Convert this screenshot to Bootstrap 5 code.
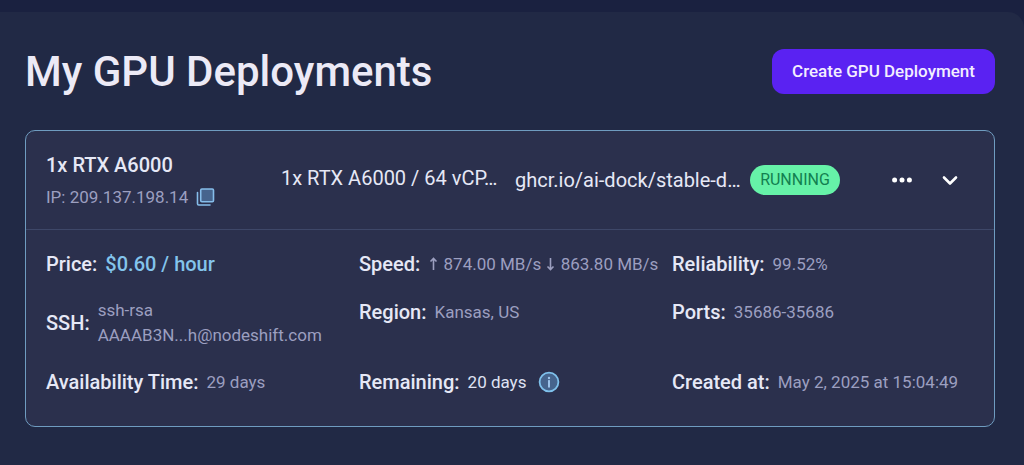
<!DOCTYPE html>
<html lang="en">
<head>
<meta charset="utf-8">
<meta name="viewport" content="width=device-width, initial-scale=1">
<title>My GPU Deployments</title>
<link href="https://cdn.jsdelivr.net/npm/bootstrap@5.3.0/dist/css/bootstrap.min.css" rel="stylesheet">
<style>
  body { background: #1a2140; color: #e6e8f6; font-family: Roboto, "Liberation Sans", sans-serif; font-size: 17px; line-height: 24px; padding-top: 12px; }
  .panel { background: #212945; border-radius: 0 16px 0 0; padding: 32px 29px 38px 25px; min-height: calc(100vh - 12px); }
  .page-head { margin-bottom: 31px; }
  .page-title { font-size: 42px; line-height: 55px; font-weight: 500; color: #eceaf6; }
  .btn-create { background: #5a22f2; color: #f3eeff; font-size: 17px; font-weight: 500; line-height: 25px; padding: 10px 20px; border: 0; border-radius: 12px; }
  .btn-create:hover { background: #6a38f5; color: #fff; }
  .deployment { background: #2b304d; border: 1px solid #6f9cc0; border-radius: 10px; color: inherit; }
  .deployment-head { display: grid; grid-template-columns: 227px 226px 227px 90px 1fr; column-gap: 8px; align-items: center; min-height: 99px; padding: 0 32px 0 20px; border-bottom: 1px solid #3e4768; }
  .machine { font-size: 20px; font-weight: 500; line-height: 28px; margin-bottom: 6px; }
  .muted { color: #9c9fc0; }
  .specs { font-size: 20px; }
  .status { background: #66f2a8; color: #128050; border-radius: 15px; font-size: 16px; font-weight: 400; line-height: 30px; padding: 0; }
  .icon-btn { background: none; border: 0; padding: 0; color: #fff; line-height: 0; }
  .facts { display: grid; grid-template-columns: repeat(3, 1fr); row-gap: 20px; padding: 20px 9px 30px 20px; }
  .fact { display: flex; gap: 8px; line-height: 28px; }
  .fact dt { font-size: 20px; font-weight: 500; white-space: nowrap; }
  .fact dd { margin: 0; color: #9c9fc0; }
  .fact .ssh-key { line-height: 25px; }
  .fact .price { color: #83c4ec; font-size: 20px; font-weight: 500; }
  .fact .remaining { color: #dfe2f3; }
  .arrow { width: 11px; height: 14px; vertical-align: -1px; }
</style>
</head>
<body>
<main class="panel">
  <header class="page-head d-flex flex-wrap justify-content-between align-items-center">
    <h1 class="page-title m-0">My GPU Deployments</h1>
    <button type="button" class="btn btn-create">Create GPU Deployment</button>
  </header>

  <section class="card deployment">
    <div class="deployment-head">
      <div>
        <h2 class="machine">1x RTX A6000</h2>
        <div class="muted d-flex align-items-center gap-2">
          <span>IP: 209.137.198.14</span>
          <button type="button" class="icon-btn" aria-label="Copy IP address">
            <svg width="19" height="18" viewBox="0 0 18 18" fill="none" stroke="#86bdea" stroke-width="1.6" stroke-linecap="round" stroke-linejoin="round">
              <rect x="4.2" y="1" width="12.8" height="12.8" rx="1.2" fill="#46648d"/>
              <path d="M1 4.5v11.3a1.2 1.2 0 0 0 1.2 1.2h11.3"/>
            </svg>
          </button>
        </div>
      </div>
      <div class="specs text-nowrap pb-1">1x RTX A6000 / 64 vCP…</div>
      <div class="specs text-nowrap">ghcr.io/ai-dock/stable-d…</div>
      <span class="badge status">RUNNING</span>
      <div class="d-flex justify-content-end gap-4">
        <button type="button" class="icon-btn" aria-label="More actions">
          <svg width="24" height="24" viewBox="0 0 24 24" fill="currentColor"><circle cx="4.6" cy="12" r="2.5"/><circle cx="12" cy="12" r="2.5"/><circle cx="19.4" cy="12" r="2.5"/></svg>
        </button>
        <button type="button" class="icon-btn" aria-label="Collapse details">
          <svg width="24" height="24" viewBox="0 0 24 24" fill="none" stroke="currentColor" stroke-width="2.6" stroke-linecap="round" stroke-linejoin="round"><path d="M6 9.5l6 6 6-6"/></svg>
        </button>
      </div>
    </div>

    <dl class="facts m-0">
      <div class="fact"><dt>Price:</dt><dd class="price">$0.60 / hour</dd></div>
      <div class="fact"><dt>Speed:</dt><dd class="text-nowrap"><svg class="arrow" viewBox="0 0 11 14" fill="none" stroke="currentColor" stroke-width="1.6" role="img" aria-label="Upload"><path d="M5.5 13V1.5M2.5 4.5l3-3 3 3"/></svg> 874.00 MB/s <svg class="arrow" viewBox="0 0 11 14" fill="none" stroke="currentColor" stroke-width="1.6" role="img" aria-label="Download"><path d="M5.5 1v11.5M2.5 9.5l3 3 3-3"/></svg> 863.80 MB/s</dd></div>
      <div class="fact"><dt>Reliability:</dt><dd>99.52%</dd></div>
      <div class="fact align-items-center"><dt>SSH:</dt><dd class="ssh-key">ssh-rsa<br>AAAAB3N...h@nodeshift.com</dd></div>
      <div class="fact"><dt>Region:</dt><dd>Kansas, US</dd></div>
      <div class="fact"><dt>Ports:</dt><dd>35686-35686</dd></div>
      <div class="fact"><dt>Availability Time:</dt><dd>29 days</dd></div>
      <div class="fact"><dt>Remaining:</dt><dd class="remaining d-flex align-items-center gap-2">20 days
        <button type="button" class="icon-btn ms-1" aria-label="About remaining time">
          <svg width="22" height="22" viewBox="0 0 22 22"><circle cx="11" cy="11" r="9.4" fill="#46648d" stroke="#7fc1ec" stroke-width="1.8"/><circle cx="11" cy="6.9" r="1.2" fill="#9dc3ea"/><path d="M11 9.8v6" stroke="#9dc3ea" stroke-width="2" stroke-linecap="round"/></svg>
        </button></dd></div>
      <div class="fact"><dt>Created at:</dt><dd class="text-nowrap">May 2, 2025 at 15:04:49</dd></div>
    </dl>
  </section>
</main>
<script src="https://cdn.jsdelivr.net/npm/bootstrap@5.3.0/dist/js/bootstrap.bundle.min.js"></script>
</body>
</html>
